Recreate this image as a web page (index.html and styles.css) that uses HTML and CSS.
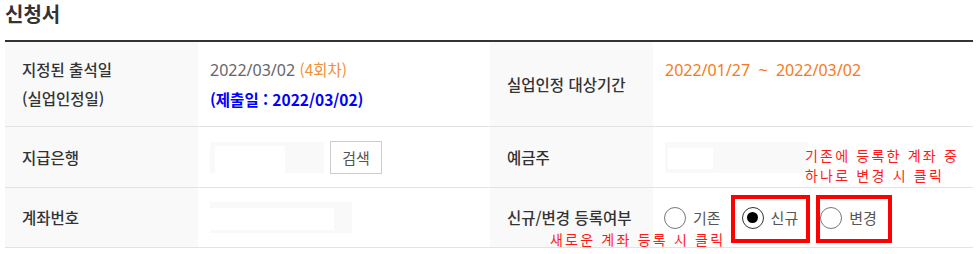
FILE: index.html
```html
<!DOCTYPE html>
<html lang="ko">
<head>
<meta charset="utf-8">
<link rel="stylesheet" href="styles.css">
</head>
<body>
<div class="page">
  <h2 class="title">신청서</h2>
  <div class="form">
    <div class="cell label row1">
      <div>지정된 출석일</div>
      <div>(실업인정일)</div>
    </div>
    <div class="cell value row1 two">
      <div><span class="gray">2022/03/02</span> <span class="orange">(4회차)</span></div>
      <div class="blue">(제출일 : 2022/03/02)</div>
    </div>
    <div class="cell label row1">실업인정 대상기간</div>
    <div class="cell value row1 top">
      <div class="range">2022/01/27 &nbsp;~&nbsp; 2022/03/02</div>
    </div>

    <div class="cell label">지급은행</div>
    <div class="cell value">
      <span class="input bank"><span class="blank b1"></span></span>
      <button class="btn" type="button">검색</button>
    </div>
    <div class="cell label">예금주</div>
    <div class="cell value anno-host">
      <span class="input owner"><span class="blank b2"></span></span>
      <div class="note note-top">기존에 등록한 계좌 중<br>하나로 변경 시 클릭</div>
    </div>

    <div class="cell label">계좌번호</div>
    <div class="cell value">
      <span class="input acct"><span class="blank b3"></span></span>
    </div>
    <div class="cell label">신규/변경 등록여부</div>
    <div class="cell value anno-host radios">
      <label class="radio"><span class="dot"></span>기존</label>
      <label class="radio on"><span class="dot"></span>신규</label>
      <label class="radio"><span class="dot"></span>변경</label>
      <span class="box box1"></span>
      <span class="box box2"></span>
      <div class="note note-bottom">새로운 계좌 등록 시 클릭</div>
    </div>
  </div>
</div>
</body>
</html>
```

FILE: styles.css
```css
html, body {
  margin: 0;
  padding: 0;
  background: #fff;
}
body {
  font-family: "Noto Sans", "Noto Sans CJK KR", sans-serif;
  color: #333;
}
.page {
  padding: 0 6px 0 5px;
}
.title {
  margin: 0;
  height: 40px;
  font-size: 20px;
  line-height: 27px;
  font-weight: 700;
  color: #333;
  font-family: "Noto Sans CJK KR", sans-serif;
}
.form {
  display: grid;
  grid-template-columns: 193px 292px 163px 320px;
  grid-template-rows: 85px 61px 60px;
  border-top: 2px solid #333;
}
.cell {
  border-bottom: 1px solid #e3e3e3;
  display: flex;
  flex-direction: column;
  justify-content: center;
  font-size: 15.5px;
  font-family: "Noto Sans CJK KR", sans-serif;
}
.label {
  background: #f9f9f9;
  padding-left: 17px;
  color: #333;
  line-height: 29px;
  font-weight: 500;
}
.value {
  padding-left: 12px;
  flex-direction: row;
  align-items: center;
  justify-content: flex-start;
}
.value.two {
  flex-direction: column;
  align-items: flex-start;
  justify-content: center;
  line-height: 29px;
}
.value.top {
  align-items: flex-start;
  padding-top: 14px;
  line-height: 29px;
}
.gray { color: #666; font-family: "Noto Sans", "Noto Sans CJK KR", sans-serif; font-size: 16px; }
.orange { color: #f0903a; }
.blue { color: #0000ff; font-weight: 700; font-size: 15.5px; }
.range { color: #f47c20; font-family: "Noto Sans", "Noto Sans CJK KR", sans-serif; font-size: 16px; }

.input {
  display: inline-flex;
  background: #f9f9f9;
  height: 31px;
  position: relative;
}
.blank { display: block; background: #fff; }
.bank { width: 114px; }
.b1 { width: 70px; height: 27px; margin: 4px 0 0 5px; }
.owner { width: 143px; }
.b2 { width: 45px; height: 21px; margin: 6px 0 0 3px; }
.acct { width: 142px; }
.b3 { width: 124px; height: 22px; margin: 6px 0 0 0; }

.btn {
  margin-left: 6px;
  width: 52px;
  height: 33px;
  border: 1px solid #ccc;
  background: #fff;
  color: #555;
  font-family: "Noto Sans CJK KR", sans-serif;
  font-size: 15px;
  padding: 0;
}

.anno-host { position: relative; }
.note {
  position: absolute;
  color: #ff1a1a;
  font-size: 14px;
  letter-spacing: 2.2px;
  font-family: "Noto Sans CJK KR", sans-serif;
  white-space: nowrap;
}
.note-top {
  left: 152px;
  top: 18px;
  line-height: 20px;
}
.note-bottom {
  left: -103px;
  top: 42px;
  line-height: 19px;
}

.radios { padding-left: 11px; }
.radio {
  display: inline-flex;
  align-items: center;
  color: #555;
  font-size: 15px;
  margin-right: 20px;
}
.radio:first-child { margin-right: 21px; }
.radio:nth-child(2) { margin-right: 22px; }
.dot {
  width: 22px;
  height: 22px;
  border: 1px solid #777;
  border-radius: 50%;
  margin-right: 7px;
  box-sizing: border-box;
  display: inline-flex;
  align-items: center;
  justify-content: center;
  background: #fff;
}
.radio.on .dot { border-color: #333; }
.radio.on .dot::after {
  content: "";
  width: 11px;
  height: 11px;
  border-radius: 50%;
  background: #000;
}
.box {
  position: absolute;
  border: 4px solid #ff0000;
  top: 7px;
  height: 48px;
  box-sizing: border-box;
}
.box1 { left: 78px; width: 79px; }
.box2 { left: 163px; width: 76px; }
```
